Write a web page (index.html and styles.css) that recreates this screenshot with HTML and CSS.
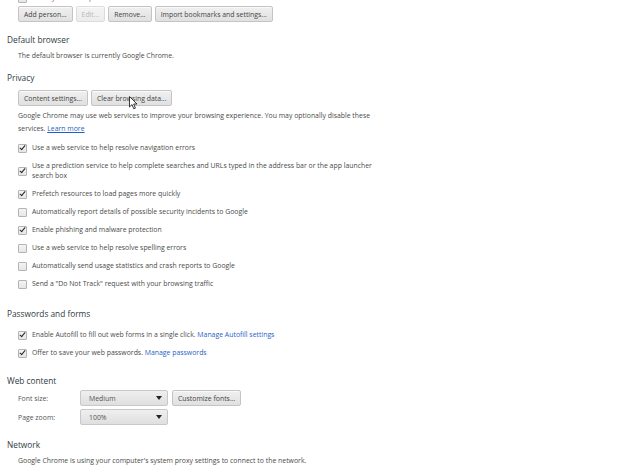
FILE: index.html
```html
<!DOCTYPE html>
<html lang="en">
<head>
  <meta charset="UTF-8">
  <title>Settings</title>
  <link rel="stylesheet" href="styles.css">
</head>
<body>
  <div class="settings">
    <section class="section section-top">
      <div class="check-row cut">
        <span class="box"></span>
        <span>Let anyone add a person to Chrome</span>
      </div>
      <div class="button-row">
        <button class="btn">Add person...</button>
        <button class="btn" disabled>Edit...</button>
        <button class="btn">Remove...</button>
        <button class="btn">Import bookmarks and settings...</button>
      </div>
    </section>

    <section class="section default-browser">
      <h3>Default browser</h3>
      <div class="content">
        <p class="text">The default browser is currently Google Chrome.</p>
      </div>
    </section>

    <section class="section privacy">
      <h3>Privacy</h3>
      <div class="content">
        <div class="button-row">
          <button class="btn">Content settings...</button>
          <button class="btn">Clear browsing data...</button>
          <svg class="cursor" width="9" height="14" viewBox="0 0 9 14">
            <path d="M0.5 0.5 L0.5 11 L3 8.6 L4.8 12.8 L6.4 12.1 L4.7 8 L8 8 Z" fill="#fff" stroke="#222" stroke-width="0.9" stroke-linejoin="round"/>
          </svg>
        </div>
        <p class="text intro">Google Chrome may use web services to improve your browsing experience. You may optionally disable these services. <a href="#">Learn more</a></p>
        <div class="checks">
          <label class="check-row"><span class="box checked"></span><span>Use a web service to help resolve navigation errors</span></label>
          <label class="check-row two-line"><span class="box checked"></span><span>Use a prediction service to help complete searches and URLs typed in the address bar or the app launcher search box</span></label>
          <label class="check-row"><span class="box checked"></span><span>Prefetch resources to load pages more quickly</span></label>
          <label class="check-row"><span class="box"></span><span>Automatically report details of possible security incidents to Google</span></label>
          <label class="check-row"><span class="box checked"></span><span>Enable phishing and malware protection</span></label>
          <label class="check-row"><span class="box"></span><span>Use a web service to help resolve spelling errors</span></label>
          <label class="check-row"><span class="box"></span><span>Automatically send usage statistics and crash reports to Google</span></label>
          <label class="check-row"><span class="box"></span><span>Send a "Do Not Track" request with your browsing traffic</span></label>
        </div>
      </div>
    </section>

    <section class="section passwords">
      <h3>Passwords and forms</h3>
      <div class="content checks">
        <label class="check-row"><span class="box checked"></span><span>Enable Autofill to fill out web forms in a single click. <a href="#">Manage Autofill settings</a></span></label>
        <label class="check-row"><span class="box checked"></span><span>Offer to save your web passwords. <a href="#">Manage passwords</a></span></label>
      </div>
    </section>

    <section class="section web-content">
      <h3>Web content</h3>
      <div class="content">
        <div class="field-row">
          <span class="field-label">Font size:</span>
          <div class="select"><span>Medium</span><span class="arrow"></span></div>
          <button class="btn">Customize fonts...</button>
        </div>
        <div class="field-row">
          <span class="field-label">Page zoom:</span>
          <div class="select"><span>100%</span><span class="arrow"></span></div>
        </div>
      </div>
    </section>

    <section class="section network">
      <h3>Network</h3>
      <div class="content">
        <p class="text">Google Chrome is using your computer's system proxy settings to connect to the network.</p>
      </div>
    </section>
  </div>
</body>
</html>
```

FILE: styles.css
```css
body {
  margin: 0;
  background: #ffffff;
  color: #4a4a4a;
  font-family: 'Open Sans', 'Noto Sans', sans-serif;
  font-size: 6.9px;
  overflow: hidden;
}

.settings {
  padding-left: 7px;
  display: flex;
  flex-direction: column;
}

h3 {
  margin: 0;
  font-size: 8.3px;
  font-weight: normal;
  line-height: 14px;
  color: #303942;
}

.content {
  padding-left: 11px;
}

.text {
  margin: 0;
  line-height: 12px;
}

.section-top {
  margin-top: -7px;
  padding-left: 11px;
}

.default-browser {
  margin-top: 11px;
}

.default-browser h3 {
  margin-bottom: 3px;
}

.privacy {
  margin-top: 9px;
}

.privacy h3 {
  margin-bottom: 5px;
}

.passwords {
  margin-top: 18px;
}

.passwords h3 {
  margin-bottom: 0;
}

.web-content {
  margin-top: 16px;
}

.web-content h3 {
  margin-bottom: 2px;
}

.network {
  margin-top: 10px;
}

.network h3 {
  margin-bottom: 3px;
}

.button-row {
  position: relative;
  display: flex;
  gap: 3px;
}

.section-top .button-row {
  margin-top: 3px;
}

.btn {
  height: 16px;
  padding: 0 5px;
  font-family: inherit;
  font-size: 6.9px;
  color: #444;
  background: linear-gradient(#f0f0f0, #e0e0e0);
  border: 1px solid #c4c4c4;
  border-radius: 2px;
  box-shadow: inset 0 1px 0 #fafafa;
}

.btn:disabled {
  color: #b8b8b8;
  background: linear-gradient(#f4f4f4, #ececec);
  border-color: #dcdcdc;
}

.cursor {
  position: absolute;
  left: 111px;
  top: 6px;
}

.intro {
  margin-top: 3px;
  line-height: 13px;
  width: 360px;
}

a {
  color: #1f5fc6;
  text-decoration: none;
}

.intro a {
  text-decoration: underline;
}

.checks {
  display: flex;
  flex-direction: column;
  gap: 8px;
}

.privacy .checks {
  margin-top: 8px;
}

.passwords .checks {
  padding-top: 9px;
}

.check-row {
  display: flex;
  align-items: flex-start;
  line-height: 10px;
  max-width: 360px;
}

.check-row.cut {
  color: #666;
}

.box {
  flex: none;
  position: relative;
  width: 7px;
  height: 7px;
  margin: 1px 5px 0 0;
  border: 1px solid #b4b4b4;
  border-radius: 1px;
  background: linear-gradient(#f4f4f4, #e6e6e6);
}

.two-line .box {
  margin-top: 6px;
}

.box.checked::after {
  content: "";
  position: absolute;
  left: 2px;
  top: -1px;
  width: 2px;
  height: 5px;
  border-right: 1.6px solid #222;
  border-bottom: 1.6px solid #222;
  transform: rotate(40deg);
}

.field-row {
  display: flex;
  align-items: center;
  gap: 4px;
  height: 16px;
  margin-bottom: 3px;
}

.field-label {
  width: 58px;
  color: #555;
}

.select {
  display: flex;
  align-items: center;
  justify-content: space-between;
  box-sizing: border-box;
  width: 88px;
  height: 16px;
  padding: 0 5px 0 8px;
  color: #555;
  background: linear-gradient(#efefef, #dfdfdf);
  border: 1px solid #c8c8c8;
  border-radius: 2px;
}

.arrow {
  width: 0;
  height: 0;
  border-left: 3px solid transparent;
  border-right: 3px solid transparent;
  border-top: 4px solid #222;
}
```
